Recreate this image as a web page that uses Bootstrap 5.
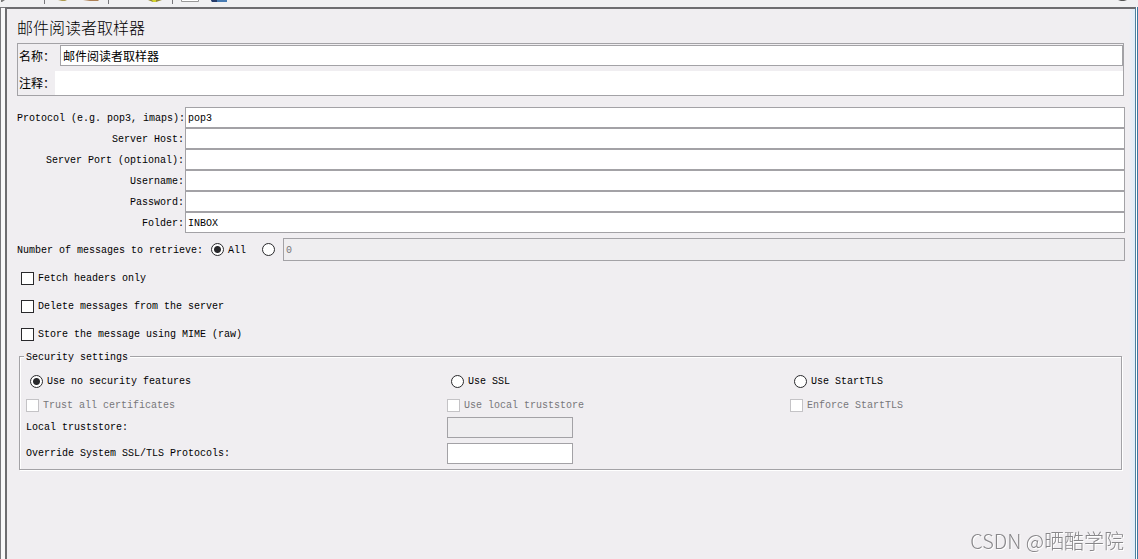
<!DOCTYPE html>
<html lang="zh-CN">
<head>
<meta charset="utf-8">
<meta name="viewport" content="width=device-width, initial-scale=1">
<title>邮件阅读者取样器</title>
<link href="https://cdn.jsdelivr.net/npm/bootstrap@5.3.0/dist/css/bootstrap.min.css" rel="stylesheet">
<style>
:root { --face: #f0eef1; --line: #a3a2a6; --mono: "Liberation Mono", "Noto Sans CJK SC", monospace; }
body { font: 10px/14px var(--mono); background: var(--face); color: #000; }
label, legend, input { font: 10px/14px var(--mono); }
.toolstrip { height: 7px; padding-left: 1px; background: #f0f0f2; }
.toolstrip svg { display: block; }
.gutter { width: 5px; flex: none; border-left: 1px solid #77777b; border-top: 1px solid #77777b; background: #f8f8f9; }
.panel-frame { border: 2px solid #6d6d70; border-right: 1px solid #4f7f9b; border-bottom: 0; padding: 6px 11px 0 10px; background: linear-gradient(to left, #deedfb, var(--face) 6px); min-width: 0; }
.window-edge { width: 2px; flex: none; border-left: 1px solid #fff; background: #387aa5; }
h1 { font: 300 16px/24px "Noto Sans CJK SC", sans-serif; margin: 0 0 4px; }
.named { border: 1px solid var(--line); padding: 1px 0 0 1px; }
.named label, .named input { font: 12px/18px "Noto Sans CJK SC", sans-serif; }
.named label { width: 41px; }
.named .remark-label { width: 36px; }
.remark-row { padding-top: 5px; }
.field { border: 1px solid var(--line); border-radius: 0; background: #fff; padding: 0 2px; height: 21px; min-width: 0; color: #000; outline-offset: -1px; }
.field:disabled { background: #efeef0; color: #77777a; }
.field.plain { border: 0; height: 24px; }
.login { display: grid; grid-template-columns: 168px 1fr; align-items: center; margin: 11px -1px 0 0; }
.login label { text-align: right; padding: 2px 1px 0 0; white-space: pre; }
.login .field { padding-top: 2px; }
.count { margin: 5px -1px 0 0; }
.count label, .count span, .tick label { padding-top: 2px; }
.count .field { height: 23px; padding-top: 2px; }
.pick { appearance: none; flex: none; width: 13px; height: 13px; margin: 0; border: 1px solid #29292c; background: #fff; }
.pick[type=radio] { border-radius: 50%; }
.pick[type=radio]:checked { background: radial-gradient(circle, #29292c 0 3px, #fff 4px); }
.pick:disabled { border-color: #c4c3c6; }
.pick:disabled + label { color: #77777a; opacity: 1; }
.options { padding: 9px 0 0 4px; gap: 12px; }
.tick { display: flex; align-items: center; gap: 4px; }
.security { position: relative; border: 1px solid var(--line); box-shadow: 1px 1px #fff, inset 1px 1px #fff; margin: 14px 2px 0; padding: 12px 4px 5px 6px; }
.security legend { position: absolute; top: -6px; left: 4px; width: auto; padding: 0 2px; margin: 0; background: var(--face); }
.security-grid { display: grid; grid-template-columns: 421fr 343fr 327fr; grid-template-rows: 24px 24px 21px 26px; align-items: center; }
.security-grid .mode { padding-left: 4px; }
.security-grid .field { width: 126px; }
.security-grid .override { margin-top: 5px; }
.watermark { position: fixed; right: 14px; bottom: 5px; font: 300 20px/26px "Noto Sans CJK SC", sans-serif; color: #88878a; text-shadow: 1px 1px #fff; }
</style>
</head>
<body class="d-flex flex-column min-vh-100">
<div class="toolstrip">
  <svg class="w-100" height="4" aria-hidden="true">
    <path d="M0 0h4L1 2H0Z" fill="#777"/>
    <path d="M43.500 0v4M107.500 0v4M171.500 0v4" stroke="#77777b"/>
    <path d="M57 0h9l-2 1h-3Z" fill="#ad9a50"/>
    <path d="M82 0h15l1 1h-9Z" fill="#ad8055"/>
    <path d="M147 0h14l-6 2h-3Z" fill="#938833"/><path d="M151 0h4v2h-3Z" fill="#d2d32c"/>
    <path d="M180.500 0v1.500h17V0" fill="#fff" stroke="#999"/>
    <path d="M210 0h16v2h-15Z" fill="#477bb3"/><path d="M210 0h6v2h-5Z" fill="#263b6a"/>
    <svg x="100%" overflow="visible"><path d="M-20 0h9l-3 1h-3Z" fill="#555"/></svg>
  </svg>
</div>
<div class="d-flex flex-grow-1">
  <div class="gutter"></div>
  <main class="panel-frame flex-grow-1">
    <h1>邮件阅读者取样器</h1>
    <form>
      <div class="named">
        <div class="d-flex align-items-center">
          <label for="name">名称：</label><input id="name" class="field flex-grow-1" value="邮件阅读者取样器">
        </div>
        <div class="remark-row d-flex align-items-center">
          <label class="remark-label" for="remark">注释：</label><input id="remark" class="field plain flex-grow-1">
        </div>
      </div>

      <div class="login">
        <label for="protocol">Protocol (e.g. pop3, imaps):</label><input id="protocol" class="field" value="pop3">
        <label for="host">Server Host:</label><input id="host" class="field">
        <label for="port">Server Port (optional):</label><input id="port" class="field">
        <label for="user">Username:</label><input id="user" class="field">
        <label for="password">Password:</label><input id="password" type="password" class="field">
        <label for="folder">Folder:</label><input id="folder" class="field" value="INBOX">
      </div>

      <div class="count d-flex align-items-center" role="radiogroup" aria-labelledby="count-label">
        <span id="count-label">Number of messages to retrieve:</span>
        <input class="pick ms-2 me-1" type="radio" name="count" id="all" checked><label for="all">All</label>
        <input class="pick me-2 ms-3" type="radio" name="count" id="some" aria-label="Limit"><input class="field flex-grow-1" value="0" aria-label="Message limit" disabled>
      </div>

      <div class="options d-flex flex-column">
        <div class="tick"><input class="pick" type="checkbox" id="headers"><label for="headers">Fetch headers only</label></div>
        <div class="tick"><input class="pick" type="checkbox" id="delete"><label for="delete">Delete messages from the server</label></div>
        <div class="tick"><input class="pick" type="checkbox" id="mime"><label for="mime">Store the message using MIME (raw)</label></div>
      </div>

      <fieldset class="security">
        <legend>Security settings</legend>
        <div class="security-grid">
          <div class="tick mode"><input class="pick" type="radio" name="sec" id="none" checked><label for="none">Use no security features</label></div>
          <div class="tick mode"><input class="pick" type="radio" name="sec" id="ssl"><label for="ssl">Use SSL</label></div>
          <div class="tick mode"><input class="pick" type="radio" name="sec" id="tls"><label for="tls">Use StartTLS</label></div>
          <div class="tick"><input class="pick" type="checkbox" id="trust" disabled><label for="trust">Trust all certificates</label></div>
          <div class="tick"><input class="pick" type="checkbox" id="local" disabled><label for="local">Use local truststore</label></div>
          <div class="tick"><input class="pick" type="checkbox" id="enforce" disabled><label for="enforce">Enforce StartTLS</label></div>
          <label for="store">Local truststore:</label><input id="store" class="field" disabled><span></span>
          <label class="override" for="protocols">Override System SSL/TLS Protocols:</label><input id="protocols" class="field override">
        </div>
      </fieldset>
    </form>
  </main>
  <div class="window-edge"></div>
</div>
<div class="watermark">CSDN @晒酷学院</div>
<script src="https://cdn.jsdelivr.net/npm/bootstrap@5.3.0/dist/js/bootstrap.bundle.min.js"></script>
</body>
</html>
